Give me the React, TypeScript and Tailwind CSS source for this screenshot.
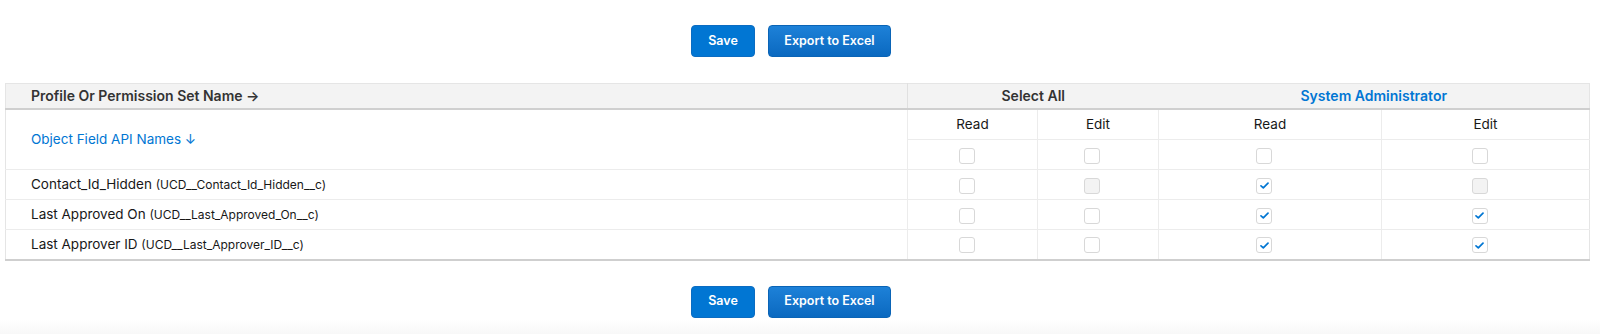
import React from 'react';

type Cell = 'empty' | 'checked' | 'disabled';

interface FieldRow {
  label: string;
  api: string;
  cells: Cell[];
}

const rows: FieldRow[] = [
  { label: 'Contact_Id_Hidden', api: 'UCD__Contact_Id_Hidden__c', cells: ['empty', 'disabled', 'checked', 'disabled'] },
  { label: 'Last Approved On', api: 'UCD__Last_Approved_On__c', cells: ['empty', 'empty', 'checked', 'checked'] },
  { label: 'Last Approver ID', api: 'UCD__Last_Approver_ID__c', cells: ['empty', 'empty', 'checked', 'checked'] },
];

const Checkbox: React.FC<{ state: Cell }> = ({ state }) => (
  <span
    className={`inline-flex items-center justify-center w-4 h-4 mr-3 rounded-[3px] border border-[#d8d8d8] align-middle ${
      state === 'disabled' ? 'bg-[#f3f3f3]' : 'bg-white'
    }`}
  >
    {state === 'checked' && (
      <svg width="9" height="7" viewBox="0 0 9 7" fill="none">
        <path d="M1 3.8 L3.3 5.8 L8 1.2" stroke="#0176d3" strokeWidth="1.7" strokeLinecap="round" strokeLinejoin="round" />
      </svg>
    )}
  </span>
);

const Buttons: React.FC = () => (
  <div className="flex justify-center gap-[13px] pr-[18px]">
    <button className="w-16 h-8 rounded bg-[#0176d3] border border-[#0b6cc2] text-white text-[12.5px] font-semibold">Save</button>
    <button className="w-[123px] h-8 rounded bg-gradient-to-b from-[#1d81d8] to-[#0a69c0] border border-[#0a64b6] text-white text-[12.5px] font-semibold">
      Export to Excel
    </button>
  </div>
);

const App: React.FC = () => {
  return (
    <div className="w-[1600px] h-[334px] bg-white text-[#181818] overflow-hidden" style={{ fontFamily: 'Inter, "Liberation Sans", sans-serif' }}>
      <div className="pt-[25px]">
        <Buttons />
      </div>

      <div className="pl-[5px] pr-[10px] mt-[26px]">
        <table className="w-full border-collapse table-fixed text-[13.5px] border-x border-[#e5e5e5]">
          <colgroup>
            <col className="w-[902px]" />
            <col className="w-[130px]" />
            <col className="w-[121px]" />
            <col className="w-[223px]" />
            <col />
          </colgroup>
          <thead>
            <tr className="h-[25px] bg-[#f3f3f3] border-t border-[#e5e5e5] border-b-2 border-b-[#cfcfcf] text-[14px]">
              <th className="text-left pl-[25px] font-semibold text-[#333333] border-r border-[#e0e0e0]">Profile Or Permission Set Name →</th>
              <th colSpan={2} className="text-center font-semibold text-[#333333]">Select All</th>
              <th colSpan={2} className="text-center font-semibold text-[#0176d3]">System Administrator</th>
            </tr>
          </thead>
          <tbody>
            <tr className="h-[31px] border-b border-[#ececec]">
              <td rowSpan={2} className="pl-[25px] text-[#0176d3] border-r border-[#ececec] border-b">Object Field API Names ↓</td>
              <td className="text-center border-r border-[#ececec]">Read</td>
              <td className="text-center border-r border-[#ececec]">Edit</td>
              <td className="text-center border-r border-[#ececec]">Read</td>
              <td className="text-center">Edit</td>
            </tr>
            <tr className="h-[30px] border-b border-[#ececec]">
              {(['empty', 'empty', 'empty', 'empty'] as Cell[]).map((c, i) => (
                <td key={i} className={`text-center ${i < 3 ? 'border-r border-[#ececec]' : ''}`}>
                  <Checkbox state={c} />
                </td>
              ))}
            </tr>
            {rows.map((r, ri) => (
              <tr key={r.api} className={`h-[30px] ${ri === rows.length - 1 ? 'border-b-2 border-b-[#cfcfcf]' : 'border-b border-[#ececec]'}`}>
                <td className="pl-[25px] border-r border-[#ececec]">
                  {r.label} <span className="text-[12px]">({r.api})</span>
                </td>
                {r.cells.map((c, i) => (
                  <td key={i} className={`text-center ${i < 3 ? 'border-r border-[#ececec]' : ''}`}>
                    <Checkbox state={c} />
                  </td>
                ))}
              </tr>
            ))}
          </tbody>
        </table>
      </div>

      <div className="mt-[25px]">
        <Buttons />
      </div>
      <div className="mt-[1px] h-[16px] bg-gradient-to-b from-white to-[#f7f7f7]" />
    </div>
  );
};

export default App;
